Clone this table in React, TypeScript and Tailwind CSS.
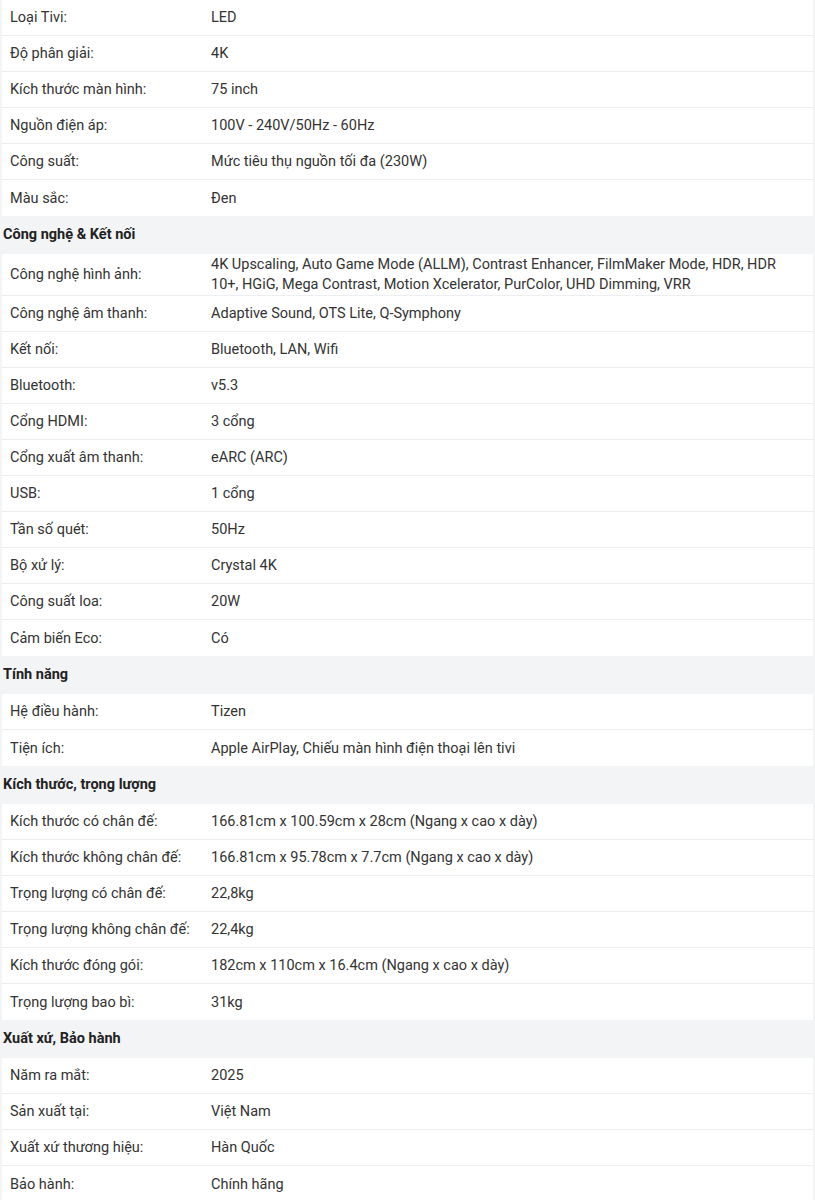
type Row = [string, string];
type Section = { title?: string; rows: Row[] };

const sections: Section[] = [
  {
    rows: [
      ['Loại Tivi:', 'LED'],
      ['Độ phân giải:', '4K'],
      ['Kích thước màn hình:', '75 inch'],
      ['Nguồn điện áp:', '100V - 240V/50Hz - 60Hz'],
      ['Công suất:', 'Mức tiêu thụ nguồn tối đa (230W)'],
      ['Màu sắc:', 'Đen'],
    ],
  },
  {
    title: 'Công nghệ & Kết nối',
    rows: [
      [
        'Công nghệ hình ảnh:',
        '4K Upscaling, Auto Game Mode (ALLM), Contrast Enhancer, FilmMaker Mode, HDR, HDR 10+, HGiG, Mega Contrast, Motion Xcelerator, PurColor, UHD Dimming, VRR',
      ],
      ['Công nghệ âm thanh:', 'Adaptive Sound, OTS Lite, Q-Symphony'],
      ['Kết nối:', 'Bluetooth, LAN, Wifi'],
      ['Bluetooth:', 'v5.3'],
      ['Cổng HDMI:', '3 cổng'],
      ['Cổng xuất âm thanh:', 'eARC (ARC)'],
      ['USB:', '1 cổng'],
      ['Tần số quét:', '50Hz'],
      ['Bộ xử lý:', 'Crystal 4K'],
      ['Công suất loa:', '20W'],
      ['Cảm biến Eco:', 'Có'],
    ],
  },
  {
    title: 'Tính năng',
    rows: [
      ['Hệ điều hành:', 'Tizen'],
      ['Tiện ích:', 'Apple AirPlay, Chiếu màn hình điện thoại lên tivi'],
    ],
  },
  {
    title: 'Kích thước, trọng lượng',
    rows: [
      ['Kích thước có chân đế:', '166.81cm x 100.59cm x 28cm (Ngang x cao x dày)'],
      ['Kích thước không chân đế:', '166.81cm x 95.78cm x 7.7cm (Ngang x cao x dày)'],
      ['Trọng lượng có chân đế:', '22,8kg'],
      ['Trọng lượng không chân đế:', '22,4kg'],
      ['Kích thước đóng gói:', '182cm x 110cm x 16.4cm (Ngang x cao x dày)'],
      ['Trọng lượng bao bì:', '31kg'],
    ],
  },
  {
    title: 'Xuất xứ, Bảo hành',
    rows: [
      ['Năm ra mắt:', '2025'],
      ['Sản xuất tại:', 'Việt Nam'],
      ['Xuất xứ thương hiệu:', 'Hàn Quốc'],
      ['Bảo hành:', 'Chính hãng'],
    ],
  },
];

export default function App() {
  return (
    <div className="min-h-[1200px] bg-[#f3f4f6] px-[2px] text-[14.5px] text-[#333] font-['Roboto','Liberation_Sans',sans-serif]">
      {sections.map((section, si) => (
        <div key={si}>
          {section.title && (
            <div className="flex h-[38px] items-center pl-px font-bold text-[#222]">
              {section.title}
            </div>
          )}
          {section.rows.map(([label, value], ri) => (
            <div
              key={ri}
              className={`flex min-h-[36px] items-center bg-white pt-px leading-[20px] ${
                ri < section.rows.length - 1 ? 'border-b border-[#eceef1]' : ''
              }`}
            >
              <div className="w-[201px] shrink-0 pl-2">{label}</div>
              <div className="flex-1 pl-2 pr-6">{value}</div>
            </div>
          ))}
        </div>
      ))}
    </div>
  );
}
